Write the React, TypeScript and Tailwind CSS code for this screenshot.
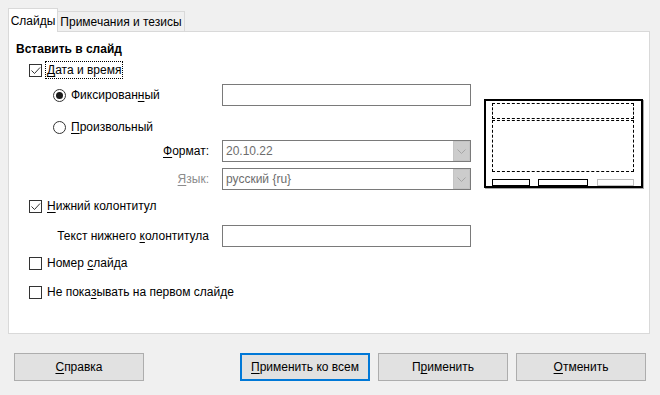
import React from 'react';

const font = { fontFamily: '"Liberation Sans", "Noto Sans", sans-serif' };

function Check({ checked }: { checked: boolean }) {
  return (
    <span className="flex h-[13px] w-[13px] shrink-0 items-center justify-center border border-[#333333] bg-white">
      {checked && (
        <svg width="11" height="11" viewBox="0 0 11 11">
          <path d="M1.5 5.5 L4.5 8.5 L10 2.5" fill="none" stroke="#333333" strokeWidth="1" />
        </svg>
      )}
    </span>
  );
}

function Radio({ checked }: { checked: boolean }) {
  return (
    <span className="flex h-[13px] w-[13px] shrink-0 items-center justify-center rounded-full border border-[#333333] bg-white">
      {checked && <span className="h-[7px] w-[7px] rounded-full bg-[#1a1a1a]" />}
    </span>
  );
}

function U({ children }: { children: React.ReactNode }) {
  return <span className="underline underline-offset-2">{children}</span>;
}

function Combo({ value }: { value: string }) {
  return (
    <div className="ml-[13px] flex h-[22px] w-[249px] items-stretch border border-[#7a7a7a] bg-white">
      <span className="flex flex-1 items-center pl-[3px] text-[#6d6d6d]">{value}</span>
      <span className="flex w-[17px] items-center justify-center border border-[#c4c4c4] bg-[#cccccc]">
        <svg width="9" height="5" viewBox="0 0 9 5">
          <path d="M0.5 0.5 L4.5 4.5 L8.5 0.5" fill="none" stroke="#a6a6a6" strokeWidth="1" />
        </svg>
      </span>
    </div>
  );
}

function Button({ children, primary }: { children: React.ReactNode; primary?: boolean }) {
  return (
    <button
      className={`flex h-[28px] w-[130px] items-center justify-center bg-[#e1e1e1] text-black ${
        primary ? 'border-2 border-[#0078d7]' : 'border border-[#adadad]'
      }`}
    >
      {children}
    </button>
  );
}

export default function App() {
  return (
    <div className="h-[395px] w-[660px] overflow-hidden bg-[#f0f0f0] pl-[8px] pt-[8px] text-[12px] leading-none text-black" style={font}>
      {/* tabs */}
      <div className="flex h-[23px] items-end whitespace-nowrap">
        <div className="relative z-10 -mb-px flex h-[24px] w-[50px] items-center justify-center border border-b-0 border-[#d9d9d9] bg-white">
          Слайды
        </div>
        <div className="flex h-[20px] w-[127px] items-center justify-center border border-l-0 border-b-0 border-[#d9d9d9] bg-[#f0f0f0] pt-[1px]">
          Примечания и тезисы
        </div>
      </div>

      {/* panel */}
      <div className="flex h-[303px] w-[642px] border border-[#d9d9d9] bg-white">
        <div className="flex w-[462px] flex-col whitespace-nowrap">
          <div className="mt-[9px] flex h-[16px] items-center pl-[7px] font-bold">Вставить в слайд</div>

          <div className="mt-[5px] flex h-[16px] items-center pl-[20px]">
            <Check checked />
            <span className="ml-[4px] px-[1px] py-[2px] outline outline-1 outline-dotted outline-black">
              <U>Д</U>ата и время
            </span>
          </div>

          <div className="mt-[6px] flex h-[22px] items-center">
            <div className="flex w-[200px] items-center pl-[44px]">
              <Radio checked />
              <span className="ml-[5px]">
                Фиксирован<U>н</U>ый
              </span>
            </div>
            <div className="ml-[13px] h-[22px] w-[249px] border border-[#7a7a7a] bg-white" />
          </div>

          <div className="mt-[13px] flex h-[16px] items-center pl-[44px]">
            <Radio checked={false} />
            <span className="ml-[5px]">
              <U>П</U>роизвольный
            </span>
          </div>

          <div className="mt-[5px] flex h-[22px] items-center">
            <span className="w-[200px] text-right">
              <U>Ф</U>ормат:
            </span>
            <Combo value="20.10.22" />
          </div>

          <div className="mt-[6px] flex h-[22px] items-center">
            <span className="w-[200px] text-right text-[#8c8c8c]">
              <U>Я</U>зык:
            </span>
            <Combo value="русский {ru}" />
          </div>

          <div className="mt-[8px] flex h-[16px] items-center pl-[20px]">
            <Check checked />
            <span className="ml-[5px]">
              <U>Н</U>ижний колонтитул
            </span>
          </div>

          <div className="mt-[11px] flex h-[22px] items-center">
            <span className="w-[200px] text-right">
              Текст нижнего <U>к</U>олонтитула
            </span>
            <div className="ml-[13px] h-[22px] w-[249px] border border-[#7a7a7a] bg-white" />
          </div>

          <div className="mt-[8px] flex h-[16px] items-center pl-[20px]">
            <Check checked={false} />
            <span className="ml-[5px]">
              Номер <U>с</U>лайда
            </span>
          </div>

          <div className="mt-[13px] flex h-[16px] items-center pl-[20px]">
            <Check checked={false} />
            <span className="ml-[5px]">
              Не пока<U>з</U>ывать на первом слайде
            </span>
          </div>
        </div>

        {/* preview */}
        <div className="ml-[13px] mt-[67px] flex h-[89px] w-[159px] flex-col border-2 border-black px-[6px] pt-[2px] shadow-[1px_1px_0_#a8a8a8]">
          <div className="h-[16px] w-[142px] border border-dashed border-black" />
          <div className="mt-[1px] h-[52px] w-[142px] border border-dashed border-black" />
          <div className="mt-[7px] flex h-[7px] w-[142px]">
            <div className="h-[7px] w-[38px] border border-black" />
            <div className="ml-[8px] h-[7px] w-[50px] border border-black" />
            <div className="ml-[9px] h-[7px] w-[37px] border border-[#c0c0c0]" />
          </div>
        </div>
      </div>

      {/* buttons */}
      <div className="mt-[19px] flex items-center pl-[6px]">
        <Button>
          <U>С</U>правка
        </Button>
        <div className="ml-[96px]">
          <Button primary>
            <U>П</U>рименить ко всем
          </Button>
        </div>
        <div className="ml-[8px]">
          <Button>
            П<U>р</U>именить
          </Button>
        </div>
        <div className="ml-[8px]">
          <Button>
            <U>О</U>тменить
          </Button>
        </div>
      </div>
    </div>
  );
}
